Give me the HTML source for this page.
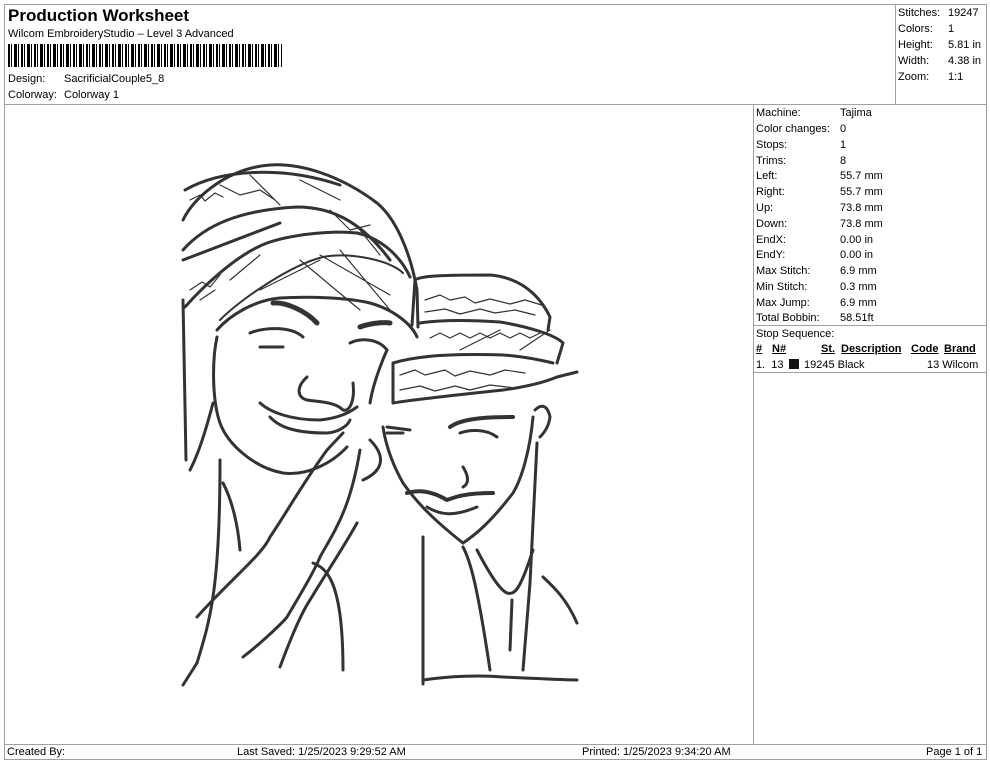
<!DOCTYPE html>
<html><head><meta charset="utf-8"><style>
*{margin:0;padding:0;box-sizing:border-box}
body{width:990px;height:762px;background:#fff;font-family:"Liberation Sans",Arial,sans-serif;color:#000;position:relative;overflow:hidden;font-size:11px}
.abs{position:absolute;white-space:nowrap}
.b{position:absolute;border:1px solid #a0a0a0}
.row{position:absolute;left:756px;height:16px;line-height:16px;white-space:nowrap;width:200px}
.row span{position:absolute;left:84px;white-space:nowrap}
</style></head><body>
<div class="b" style="left:4px;top:4px;width:983px;height:101px"></div>
<div class="b" style="left:895px;top:4px;width:92px;height:101px"></div>
<div class="b" style="left:4px;top:104px;width:983px;height:641px"></div>
<div class="b" style="left:753px;top:104px;width:1px;height:641px;border-width:0 0 0 1px"></div>
<div class="b" style="left:753px;top:325px;width:234px;height:1px;border-width:1px 0 0 0"></div>
<div class="b" style="left:753px;top:372px;width:234px;height:1px;border-width:1px 0 0 0"></div>
<div class="b" style="left:4px;top:744px;width:983px;height:16px"></div>

<div class="abs" style="left:8px;top:6px;font-size:17px;font-weight:bold">Production Worksheet</div>
<div class="abs" style="left:8px;top:28px">Wilcom EmbroideryStudio – Level 3 Advanced</div>
<div class="abs" style="left:8px;top:44px;width:274px;height:23px;background:repeating-linear-gradient(90deg,#000 0 2px,#fff 2px 3px,#000 3px 4px,#fff 4px 6px,#000 6px 9px,#fff 9px 10px,#000 10px 11px,#fff 11px 13px)"></div>
<div class="abs" style="left:8px;top:73px">Design:</div><div class="abs" style="left:64px;top:73px">SacrificialCouple5_8</div>
<div class="abs" style="left:8px;top:89px">Colorway:</div><div class="abs" style="left:64px;top:89px">Colorway 1</div>

<div class="abs" style="left:898px;top:5px;line-height:16px">Stitches:<br>Colors:<br>Height:<br>Width:<br>Zoom:</div>
<div class="abs" style="left:948px;top:5px;line-height:16px">19247<br>1<br>5.81 in<br>4.38 in<br>1:1</div>

<div class="row" style="top:105px">Machine:<span>Tajima</span></div>
<div class="row" style="top:121px">Color changes:<span>0</span></div>
<div class="row" style="top:137px">Stops:<span>1</span></div>
<div class="row" style="top:153px">Trims:<span>8</span></div>
<div class="row" style="top:168px">Left:<span>55.7 mm</span></div>
<div class="row" style="top:184px">Right:<span>55.7 mm</span></div>
<div class="row" style="top:200px">Up:<span>73.8 mm</span></div>
<div class="row" style="top:216px">Down:<span>73.8 mm</span></div>
<div class="row" style="top:232px">EndX:<span>0.00 in</span></div>
<div class="row" style="top:247px">EndY:<span>0.00 in</span></div>
<div class="row" style="top:263px">Max Stitch:<span>6.9 mm</span></div>
<div class="row" style="top:279px">Min Stitch:<span>0.3 mm</span></div>
<div class="row" style="top:295px">Max Jump:<span>6.9 mm</span></div>
<div class="row" style="top:310px">Total Bobbin:<span>58.51ft</span></div>
<div class="row" style="top:326px">Stop Sequence:</div>
<div class="abs" style="left:756px;top:343px;font-weight:bold;text-decoration:underline">#</div>
<div class="abs" style="left:772px;top:343px;font-weight:bold;text-decoration:underline">N#</div>
<div class="abs" style="left:821px;top:343px;font-weight:bold;text-decoration:underline">St.</div>
<div class="abs" style="left:841px;top:343px;font-weight:bold;text-decoration:underline">Description</div>
<div class="abs" style="left:911px;top:343px;font-weight:bold;text-decoration:underline">Code</div>
<div class="abs" style="left:944px;top:343px;font-weight:bold;text-decoration:underline">Brand</div>
<div class="abs" style="left:756px;top:359px">1.&nbsp; 13</div>
<div class="abs" style="left:789px;top:359px;width:10px;height:10px;background:#111"></div>
<div class="abs" style="left:804px;top:359px">19245 Black</div>
<div class="abs" style="left:927px;top:359px">13 Wilcom</div>

<div class="abs" style="left:7px;top:746px">Created By:</div>
<div class="abs" style="left:237px;top:746px">Last Saved: 1/25/2023 9:29:52 AM</div>
<div class="abs" style="left:582px;top:746px">Printed: 1/25/2023 9:34:20 AM</div>
<div class="abs" style="left:926px;top:746px">Page 1 of 1</div>

<svg class="abs" style="left:0;top:0" width="990" height="762" fill="none" stroke="#333" stroke-width="3" stroke-linecap="round" stroke-linejoin="round">
<path d="M183,220 C195,195 230,168 270,165 C300,163 340,175 377,203 C395,218 410,250 417,290 L418,327"/>
<path d="M183,250 C205,225 240,210 297,207 C330,207 360,220 390,260"/>
<path d="M183,260 L280,223"/>
<path d="M185,190 C220,170 280,165 340,185"/>
<path d="M185,307 C200,290 235,255 267,243 C290,235 330,230 357,233 C380,238 400,255 410,277"/>
<path d="M217,330 C230,315 255,300 280,298 C310,296 350,298 370,303 C395,310 412,325 417,337"/>
<path d="M220,320 C240,300 290,265 323,257 C350,252 390,260 403,273" stroke-width="2"/>
<path d="M183,300 L186,460"/>
<path d="M217,337 C212,360 212,400 220,423 C228,445 255,468 283,473 C305,476 330,465 347,447"/>
<path d="M387,350 C378,370 372,390 370,403"/>
<path d="M190,470 C198,455 206,430 213,403"/>
<path d="M223,483 C232,500 238,525 240,550"/>
<path d="M197,663 C210,620 220,590 220,460"/>
<path d="M197,617 C230,580 262,555 270,537 C285,515 303,483 327,450 L343,433"/>
<path d="M243,657 C265,640 285,620 287,617 C300,595 315,570 320,557 C335,530 350,510 360,450"/>
<path d="M280,667 C290,640 300,615 310,600 C325,575 345,545 357,523"/>
<path d="M313,563 C325,568 343,577 343,670"/>
<path d="M183,685 L197,663"/>
<path d="M273,303 C285,302 305,310 317,323" stroke-width="5"/>
<path d="M360,327 C370,323 385,322 390,323" stroke-width="5"/>
<path d="M250,333 C262,328 290,325 303,337 M260,347 L283,347"/>
<path d="M350,343 C360,338 378,338 387,350"/>
<path d="M307,377 C295,388 298,398 307,400 C320,402 335,402 343,410 C350,412 355,400 353,383"/>
<path d="M260,403 C270,412 290,420 320,420 C340,418 350,412 357,407 M270,417 C280,428 297,433 327,433 C340,432 348,425 350,420"/>
<path d="M415,280 C420,276 440,275 490,275 C515,277 537,290 550,317 L548,330"/>
<path d="M420,323 C440,320 470,320 500,322 C530,327 555,335 563,343 L557,363"/>
<path d="M393,363 C410,358 437,353 503,355 C530,357 553,363 553,363"/>
<path d="M393,403 C410,400 437,397 503,390 C525,387 545,382 557,377 L577,372"/>
<path d="M393,363 L393,403 M415,280 L412,325"/>
<path d="M383,427 C385,440 390,460 403,483 C415,500 430,517 463,543"/>
<path d="M463,543 C475,535 490,523 513,493 C522,478 530,450 533,417"/>
<path d="M535,410 C540,405 547,403 550,417 C549,425 545,432 540,437"/>
<path d="M450,427 C460,420 477,417 513,417" stroke-width="4"/>
<path d="M387,427 L410,430"/>
<path d="M460,433 C468,430 485,428 497,437 M387,433 L403,433"/>
<path d="M463,467 C468,475 470,483 463,487"/>
<path d="M407,493 C418,490 430,490 447,500 C455,497 465,493 493,493" stroke-width="4"/>
<path d="M427,507 C440,515 453,517 477,507"/>
<path d="M463,547 C470,560 477,583 490,670"/>
<path d="M537,443 C535,480 533,517 530,583 L523,670"/>
<path d="M477,550 C490,575 500,590 507,593 C515,595 520,590 533,550"/>
<path d="M543,577 C555,588 567,600 577,623"/>
<path d="M423,680 C450,676 480,675 503,677 C530,678 560,680 577,680"/>
<path d="M423,537 L423,684 M512,600 L510,650"/>
<path d="M370,440 C385,455 385,470 363,480"/>
<g stroke-width="1.2">
<path d="M190,200 l10,-5 5,6 10,-8 8,4 M220,185 l20,10 20,-5 15,10 M250,175 l30,30 M300,180 l40,20 M330,210 l20,20 l20,-5 M360,230 l20,25"/>
<path d="M190,290 l12,-8 8,5 10,-12 M200,300 l15,-10 M230,280 l30,-25 M300,260 l60,50 M320,255 l70,40 M340,250 l50,60 M260,290 l60,-30"/>
<path d="M425,300 l15,-5 10,5 15,-3 10,6 15,-4 20,5 15,-4 20,6 M425,312 l20,-3 15,5 20,-5 15,4 20,-3 20,5"/>
<path d="M430,338 l10,-5 10,5 10,-5 10,5 10,-5 10,5 10,-5 10,5 10,-5 10,5 10,-5 M460,350 l40,-20 M520,350 l30,-20"/>
<path d="M400,375 l15,-5 10,5 20,-5 10,6 15,-5 20,4 15,-5 20,3 M400,390 l20,-4 15,5 20,-5 15,4 20,-5 25,3"/>
</g>
</svg>
</body></html>
